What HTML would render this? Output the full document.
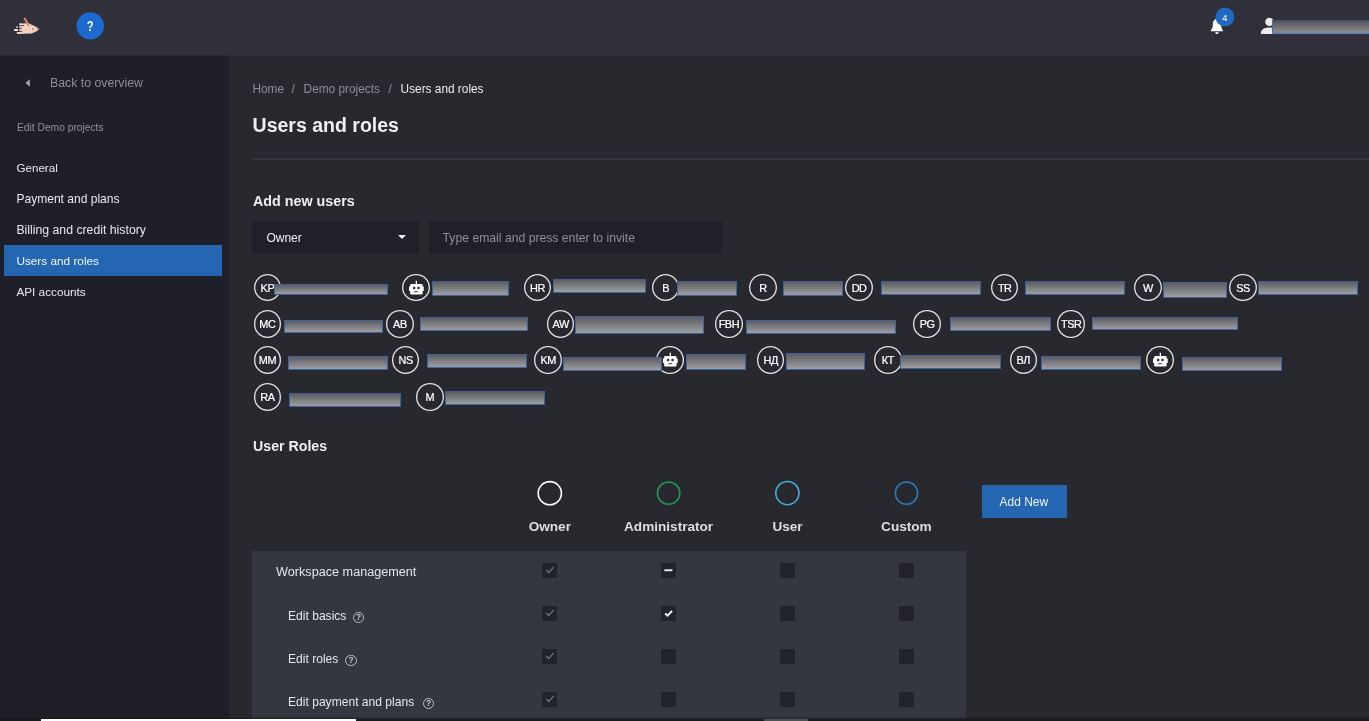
<!DOCTYPE html>
<html lang="en">
<head>
<meta charset="utf-8">
<title>Users and roles</title>
<style>
*{box-sizing:border-box;margin:0;padding:0}
html,body{width:1369px;height:721px;overflow:hidden;background:#28292f}
body{position:relative;font-family:"Liberation Sans",sans-serif;color:#e9e9ed;font-size:12px;-webkit-font-smoothing:antialiased}
#wrap{position:absolute;left:0;top:0;width:1369px;height:721px;will-change:transform}
.abs{position:absolute}
.bc{top:84.4px;font-size:11.85px;color:#8d8e96}
.t{position:absolute;white-space:nowrap;line-height:1}
/* top bar */
#topbar{position:absolute;left:0;top:0;width:1369px;height:55px;background:#2f303a}
#topedge{position:absolute;left:0;top:55px;width:1369px;height:1px;background:linear-gradient(90deg,#272831 229px,#2c2d35 229px)}
#help{position:absolute;left:76px;top:12px;width:28px;height:28px;color:#f4f8ff;font-weight:700;font-size:14px;line-height:28px;text-align:center}
#help span{display:inline-block;transform:scaleX(0.8);position:relative;left:0.5px}
#badge{position:absolute;left:1215.4px;top:7.5px;width:19px;height:19px;color:#dbe7f8;font-weight:700;font-size:8.4px;line-height:21.2px;text-align:center}
/* sidebar */
#sidebar{position:absolute;left:0;top:56px;width:229px;height:665px;background:#1f1f29}
#sidebar .item{position:absolute;left:4px;width:218px;height:31px;line-height:32.4px;padding-left:12.4px;font-size:12px;color:#e7e7eb;white-space:nowrap}
#sidebar .item.sel{background:#2566b3;color:#f1f5fb}
/* main */
.bar{position:absolute;border:1.2px solid #41619b;background:linear-gradient(#5e5e61,#9c9ea3)}
.av{position:absolute;width:27.6px;height:27.6px;border-radius:50%;box-shadow:inset 0 0 0 1.35px #dedee2;color:#fff;font-size:10.9px;font-weight:400;-webkit-text-stroke:0.22px #fff;text-align:center;line-height:29.7px;letter-spacing:-0.45px;white-space:nowrap}
.av svg{position:absolute;left:-0.1px;top:0.1px}
.rl{position:absolute;white-space:nowrap;font-weight:700;font-size:13.6px;line-height:1;color:#dedee2;transform:translateX(-50%)}
#table{position:absolute;left:252px;top:550.5px;width:714px;height:171px;background:#353740}
.cb{position:absolute;width:15px;height:15px;background:#22232d}
.row{position:absolute;white-space:nowrap;line-height:1;font-size:12px;color:#e6e6ea}
.q{position:absolute;width:11.6px;height:11.6px;border-radius:50%;border:1.35px solid #bdbec6;color:#c6c7ce;font-size:8.3px;font-weight:700;line-height:9.2px;text-align:center}
</style>
</head>
<body>
<div id="wrap">

<header id="topbar">
  <svg class="abs" style="left:10px;top:12px" width="34" height="28" viewBox="0 0 34 28">
    <path d="M9.2 11.4 L18.6 11.3 L24 13.7 L29.4 16.8 L27.2 18.9 L21.7 21.6 L7 21.9 L6.8 20 L9.2 19.8 Z" fill="#f2d1c3"/>
    <rect x="9.4" y="11.5" width="2.1" height="1.5" fill="#faefeb"/>
    <rect x="6.3" y="14.4" width="2" height="1.4" fill="#f3e4e0"/>
    <rect x="4.2" y="17.1" width="3.7" height="1.9" fill="#fdf8f7"/>
    <path d="M8.4 13.6 H14 M8.4 16.4 H11.7 M6.6 19.5 H12" stroke="#3d262a" stroke-width="0.8" fill="none"/>
    <path d="M8.8 11.2 V19.5" stroke="#34262d" stroke-width="0.8" fill="none"/>
    <path d="M13.5 6 L15.3 5.6 L19.7 13.7 L18 14.7 Z" fill="#e98b6b"/>
    <path d="M27 16 L29.7 16.8 L28 17.8 Z" fill="#c9343c"/>
    <circle cx="22.9" cy="16.9" r="0.75" fill="#6d5852"/>
  </svg>
  <svg class="abs" style="left:74px;top:10px" width="32" height="32" viewBox="74 10 32 32"><circle cx="90.25" cy="25.9" r="13.7" fill="#1b6ad0"/></svg>
  <div id="help"><span>?</span></div>
  <svg class="abs" style="left:1209.5px;top:17.6px" width="14.3" height="17" viewBox="0 0 15 17" preserveAspectRatio="none">
    <path d="M7.3 1 C4.3 1 3 3.6 3 6.4 C3 9.2 2.2 10.6 1 11.8 L1 13.2 L13.4 13.2 L13.4 11.8 C12.2 10.6 11.6 9.2 11.6 6.4 C11.6 3.6 10.3 1 7.3 1 Z" fill="#fff"/>
    <path d="M5.6 14.2 L9 14.2 C9 15.4 8.3 16.1 7.3 16.1 C6.3 16.1 5.6 15.4 5.6 14.2 Z" fill="#fff"/>
  </svg>
  <svg class="abs" style="left:1212px;top:4px" width="26" height="26" viewBox="1212 4 26 26"><circle cx="1224.9" cy="17" r="9.4" fill="#2068c0"/></svg>
  <div id="badge">4</div>
  <svg class="abs" style="left:1260px;top:17px" width="18" height="18" viewBox="0 0 18 18">
    <circle cx="9.4" cy="4.9" r="4.2" fill="#ececee"/>
    <path d="M0.8 17 C0.8 12.6 4 10.6 9.4 10.6 C14.8 10.6 18 12.6 18 17 Z" fill="#ececee"/>
  </svg>
  <div class="bar" style="left:1271.5px;top:20px;width:100px;height:14px;border-style:solid;border-width:2px 1px 2px 1px;border-color:#43546f #4b689c #6c82ad #4b689c;background:linear-gradient(#5a595d,#8a8a8c)"></div>
</header>

<div id="topedge"></div>
<nav id="sidebar">
  <svg class="abs" style="left:24.5px;top:23.2px" width="5" height="8" viewBox="0 0 5 8"><path d="M4.8 0.3 L4.8 7.7 L0.5 4 Z" fill="#a4a5ad"/></svg>
  <div class="t" style="left:50px;top:21.4px;font-size:12.3px;color:#8d8e97">Back to overview</div>
  <div class="t" style="left:17px;top:67.2px;font-size:10.25px;color:#90919a">Edit Demo projects</div>
  <div class="item" style="top:96px;font-size:11.65px">General</div>
  <div class="item" style="top:127px;font-size:12.05px">Payment and plans</div>
  <div class="item" style="top:158px;font-size:12.27px">Billing and credit history</div>
  <div class="item sel" style="top:189px;font-size:11.8px">Users and roles</div>
  <div class="item" style="top:220px;font-size:11.78px">API accounts</div>
</nav>

<!-- MAIN -->
<div class="t bc" style="left:252.4px">Home</div>
<div class="t bc" style="left:291.4px">/</div>
<div class="t bc" style="left:303.6px">Demo projects</div>
<div class="t bc" style="left:388.6px">/</div>
<div class="t bc" style="left:400.6px;color:#e9e9ed">Users and roles</div>
<div class="t" style="left:252.6px;top:115.6px;font-size:19.5px;font-weight:700;color:#efeff2">Users and roles</div>
<div class="abs" style="left:252px;top:157px;width:1117px;height:1px;background:#25262c"></div>
<div class="abs" style="left:252px;top:158px;width:1117px;height:2px;background:linear-gradient(#36373f,#313239)"></div>

<div class="t" style="left:253px;top:194.2px;font-size:14.3px;font-weight:700;color:#efeff2">Add new users</div>
<div class="abs" style="left:252px;top:221px;width:167px;height:33px;background:#1f2029"></div>
<div class="t" style="left:266.4px;top:231.6px;font-size:12px;color:#f0f0f3">Owner</div>
<svg class="abs" style="left:398px;top:235.4px" width="8" height="4" viewBox="0 0 8 4"><path d="M0 0 L8 0 L4 4 Z" fill="#f0f0f3"/></svg>
<div class="abs" style="left:429px;top:221px;width:292.5px;height:33px;background:#1f2029"></div>
<div class="t" style="left:442.6px;top:231.6px;font-size:12.2px;color:#8e8f97">Type email and press enter to invite</div>

<div id="users">
<div class="av" style="left:253.6px;top:273.8px">KP</div>
<div class="av" style="left:402.0px;top:273.8px"><svg width="28" height="28" viewBox="0 0 28 28"><path d="M13.7 6.8 h1.3 v3.3 h4.4 a1.2 1.2 0 0 1 1.2 1.2 v1.3 h1.1 v4.4 h-1.1 v2.2 a1.2 1.2 0 0 1 -1.2 1.2 h-10.1 a1.2 1.2 0 0 1 -1.2 -1.2 v-2.2 h-1.1 v-4.4 h1.1 v-1.3 a1.2 1.2 0 0 1 1.2 -1.2 h4.4 Z" fill="#fff"/><circle cx="12.1" cy="14.1" r="1.25" fill="#23242b"/><circle cx="16.5" cy="14.1" r="1.25" fill="#23242b"/><rect x="12.2" y="17.3" width="4" height="0.9" fill="#23242b"/></svg></div>
<div class="av" style="left:523.6px;top:273.8px">HR</div>
<div class="av" style="left:651.9px;top:273.8px">B</div>
<div class="av" style="left:749.1px;top:273.8px">R</div>
<div class="av" style="left:845.3px;top:273.8px">DD</div>
<div class="av" style="left:990.9px;top:273.8px">TR</div>
<div class="av" style="left:1134.2px;top:273.8px">W</div>
<div class="av" style="left:1229.3px;top:273.8px">SS</div>
<div class="av" style="left:253.6px;top:310.2px">MC</div>
<div class="av" style="left:386.1px;top:310.2px">AB</div>
<div class="av" style="left:546.9px;top:310.2px">AW</div>
<div class="av" style="left:715.1px;top:310.2px">FBH</div>
<div class="av" style="left:913.4px;top:310.2px">PG</div>
<div class="av" style="left:1057.4px;top:310.2px">TSR</div>
<div class="av" style="left:253.6px;top:346.4px">MM</div>
<div class="av" style="left:391.8px;top:346.4px">NS</div>
<div class="av" style="left:534.3px;top:346.4px">KM</div>
<div class="av" style="left:656.4px;top:346.4px"><svg width="28" height="28" viewBox="0 0 28 28"><path d="M13.7 6.8 h1.3 v3.3 h4.4 a1.2 1.2 0 0 1 1.2 1.2 v1.3 h1.1 v4.4 h-1.1 v2.2 a1.2 1.2 0 0 1 -1.2 1.2 h-10.1 a1.2 1.2 0 0 1 -1.2 -1.2 v-2.2 h-1.1 v-4.4 h1.1 v-1.3 a1.2 1.2 0 0 1 1.2 -1.2 h4.4 Z" fill="#fff"/><circle cx="12.1" cy="14.1" r="1.25" fill="#23242b"/><circle cx="16.5" cy="14.1" r="1.25" fill="#23242b"/><rect x="12.2" y="17.3" width="4" height="0.9" fill="#23242b"/></svg></div>
<div class="av" style="left:756.9px;top:346.4px">НД</div>
<div class="av" style="left:874.0px;top:346.4px">КТ</div>
<div class="av" style="left:1009.5px;top:346.4px">ВЛ</div>
<div class="av" style="left:1146.3px;top:346.4px"><svg width="28" height="28" viewBox="0 0 28 28"><path d="M13.7 6.8 h1.3 v3.3 h4.4 a1.2 1.2 0 0 1 1.2 1.2 v1.3 h1.1 v4.4 h-1.1 v2.2 a1.2 1.2 0 0 1 -1.2 1.2 h-10.1 a1.2 1.2 0 0 1 -1.2 -1.2 v-2.2 h-1.1 v-4.4 h1.1 v-1.3 a1.2 1.2 0 0 1 1.2 -1.2 h4.4 Z" fill="#fff"/><circle cx="12.1" cy="14.1" r="1.25" fill="#23242b"/><circle cx="16.5" cy="14.1" r="1.25" fill="#23242b"/><rect x="12.2" y="17.3" width="4" height="0.9" fill="#23242b"/></svg></div>
<div class="av" style="left:253.6px;top:383.0px">RA</div>
<div class="av" style="left:416.0px;top:383.0px">M</div>
<div class="bar" style="left:273.5px;top:284.3px;width:114.4px;height:10.4px"></div>
<div class="bar" style="left:431.9px;top:280.8px;width:77.2px;height:15.0px"></div>
<div class="bar" style="left:552.7px;top:278.8px;width:93.3px;height:14.6px"></div>
<div class="bar" style="left:676.5px;top:280.8px;width:60.5px;height:14.8px"></div>
<div class="bar" style="left:782.9px;top:280.8px;width:60.0px;height:15.0px"></div>
<div class="bar" style="left:880.9px;top:280.8px;width:100.1px;height:14.2px"></div>
<div class="bar" style="left:1024.8px;top:280.8px;width:100.1px;height:14.2px"></div>
<div class="bar" style="left:1163.2px;top:282.1px;width:63.6px;height:15.9px"></div>
<div class="bar" style="left:1257.9px;top:280.8px;width:99.9px;height:14.2px"></div>
<div class="bar" style="left:284.4px;top:320.2px;width:99.1px;height:13.3px"></div>
<div class="bar" style="left:420.3px;top:317.2px;width:107.4px;height:13.7px"></div>
<div class="bar" style="left:575.3px;top:316.0px;width:128.6px;height:18.0px"></div>
<div class="bar" style="left:746.2px;top:320.2px;width:149.6px;height:13.6px"></div>
<div class="bar" style="left:949.9px;top:316.9px;width:101.2px;height:14.0px"></div>
<div class="bar" style="left:1092.0px;top:316.9px;width:145.7px;height:13.3px"></div>
<div class="bar" style="left:288.2px;top:356.0px;width:99.7px;height:14.2px"></div>
<div class="bar" style="left:426.9px;top:353.8px;width:100.4px;height:14.6px"></div>
<div class="bar" style="left:563.2px;top:356.7px;width:99.1px;height:14.6px"></div>
<div class="bar" style="left:685.9px;top:353.8px;width:59.9px;height:15.9px"></div>
<div class="bar" style="left:786.2px;top:352.7px;width:78.7px;height:17.0px"></div>
<div class="bar" style="left:900.4px;top:354.5px;width:100.8px;height:14.6px"></div>
<div class="bar" style="left:1041.0px;top:355.8px;width:99.9px;height:14.2px"></div>
<div class="bar" style="left:1181.9px;top:356.7px;width:100.1px;height:14.6px"></div>
<div class="bar" style="left:288.8px;top:392.6px;width:112.5px;height:14.4px"></div>
<div class="bar" style="left:444.9px;top:390.8px;width:100.1px;height:14.4px"></div>
</div><!--/users-->

<div class="t" style="left:253px;top:439.2px;font-size:14.2px;font-weight:700;color:#efeff2">User Roles</div>

<svg class="abs" style="left:530px;top:475px" width="400" height="36" viewBox="530 475 400 36" fill="none" stroke-width="1.6">
  <circle cx="549.8" cy="493.2" r="11.6" stroke="#ffffff"/>
  <circle cx="668.6" cy="493.1" r="11.2" stroke="#209a5e" stroke-width="1.5"/>
  <circle cx="787.4" cy="493.1" r="11.6" stroke="#4cabde"/>
  <circle cx="906.5" cy="493.1" r="11.2" stroke="#2d7bbf" stroke-width="1.5"/>
</svg>
<div class="rl" style="left:549.8px;top:519.6px">Owner</div>
<div class="rl" style="left:668.6px;top:519.6px">Administrator</div>
<div class="rl" style="left:787.5px;top:519.6px">User</div>
<div class="rl" style="left:906.4px;top:519.6px">Custom</div>
<div class="abs" style="left:982px;top:485px;width:85px;height:33px;background:#2566b3"></div>
<div class="t" style="left:999.6px;top:497.2px;font-size:11.95px;color:#eef3fa">Add New</div>

<div id="table">
<div class="row" style="left:24.1px;top:15.4px;font-size:12.65px">Workspace management</div>
<div class="cb" style="left:290.00px;top:12.50px"><svg style="position:absolute;left:0;top:0" width="15" height="15" viewBox="0 0 15 15"><path d="M4.2 7.2 L6.8 9.5 L11.6 4" fill="none" stroke="#85868d" stroke-width="1.1"/></svg></div>
<div class="cb" style="left:409.00px;top:12.50px"><svg style="position:absolute;left:0;top:0" width="15" height="15" viewBox="0 0 15 15"><rect x="3.4" y="6.3" width="8" height="1.9" fill="#e9e9ee"/></svg></div>
<div class="cb" style="left:528.00px;top:12.50px"></div>
<div class="cb" style="left:647.00px;top:12.50px"></div>
<div class="row" style="left:36.0px;top:59.6px;font-size:12.08px">Edit basics</div>
<div class="q" style="left:100.8px;top:61.4px">?</div>
<div class="cb" style="left:290.00px;top:55.50px"><svg style="position:absolute;left:0;top:0" width="15" height="15" viewBox="0 0 15 15"><path d="M4.2 7.2 L6.8 9.5 L11.6 4" fill="none" stroke="#85868d" stroke-width="1.1"/></svg></div>
<div class="cb" style="left:409.00px;top:55.50px"><svg style="position:absolute;left:0;top:0" width="15" height="15" viewBox="0 0 15 15"><path d="M4.2 7.5 L6.5 9.7 L11.1 4.8" fill="none" stroke="#ffffff" stroke-width="1.9"/></svg></div>
<div class="cb" style="left:528.00px;top:55.50px"></div>
<div class="cb" style="left:647.00px;top:55.50px"></div>
<div class="row" style="left:36.0px;top:102.6px;font-size:12.08px">Edit roles</div>
<div class="q" style="left:93.3px;top:104.4px">?</div>
<div class="cb" style="left:290.00px;top:98.50px"><svg style="position:absolute;left:0;top:0" width="15" height="15" viewBox="0 0 15 15"><path d="M4.2 7.2 L6.8 9.5 L11.6 4" fill="none" stroke="#85868d" stroke-width="1.1"/></svg></div>
<div class="cb" style="left:409.00px;top:98.50px"></div>
<div class="cb" style="left:528.00px;top:98.50px"></div>
<div class="cb" style="left:647.00px;top:98.50px"></div>
<div class="row" style="left:36.0px;top:145.6px;font-size:12.08px">Edit payment and plans</div>
<div class="q" style="left:170.7px;top:147.4px">?</div>
<div class="cb" style="left:290.00px;top:141.50px"><svg style="position:absolute;left:0;top:0" width="15" height="15" viewBox="0 0 15 15"><path d="M4.2 7.2 L6.8 9.5 L11.6 4" fill="none" stroke="#85868d" stroke-width="1.1"/></svg></div>
<div class="cb" style="left:409.00px;top:141.50px"></div>
<div class="cb" style="left:528.00px;top:141.50px"></div>
<div class="cb" style="left:647.00px;top:141.50px"></div>
</div><!--/table-->

<div class="abs" style="left:0;top:716.6px;width:1369px;height:4.4px;background:linear-gradient(rgba(20,20,22,0.15),rgba(24,24,26,0.9) 75%)"></div>
<div class="abs" style="left:41px;top:719.3px;width:314.6px;height:2px;background:#fff"></div>
<div class="abs" style="left:764px;top:719.3px;width:44px;height:2px;background:#505052"></div>
</div><!--/wrap-->
</body>
</html>
